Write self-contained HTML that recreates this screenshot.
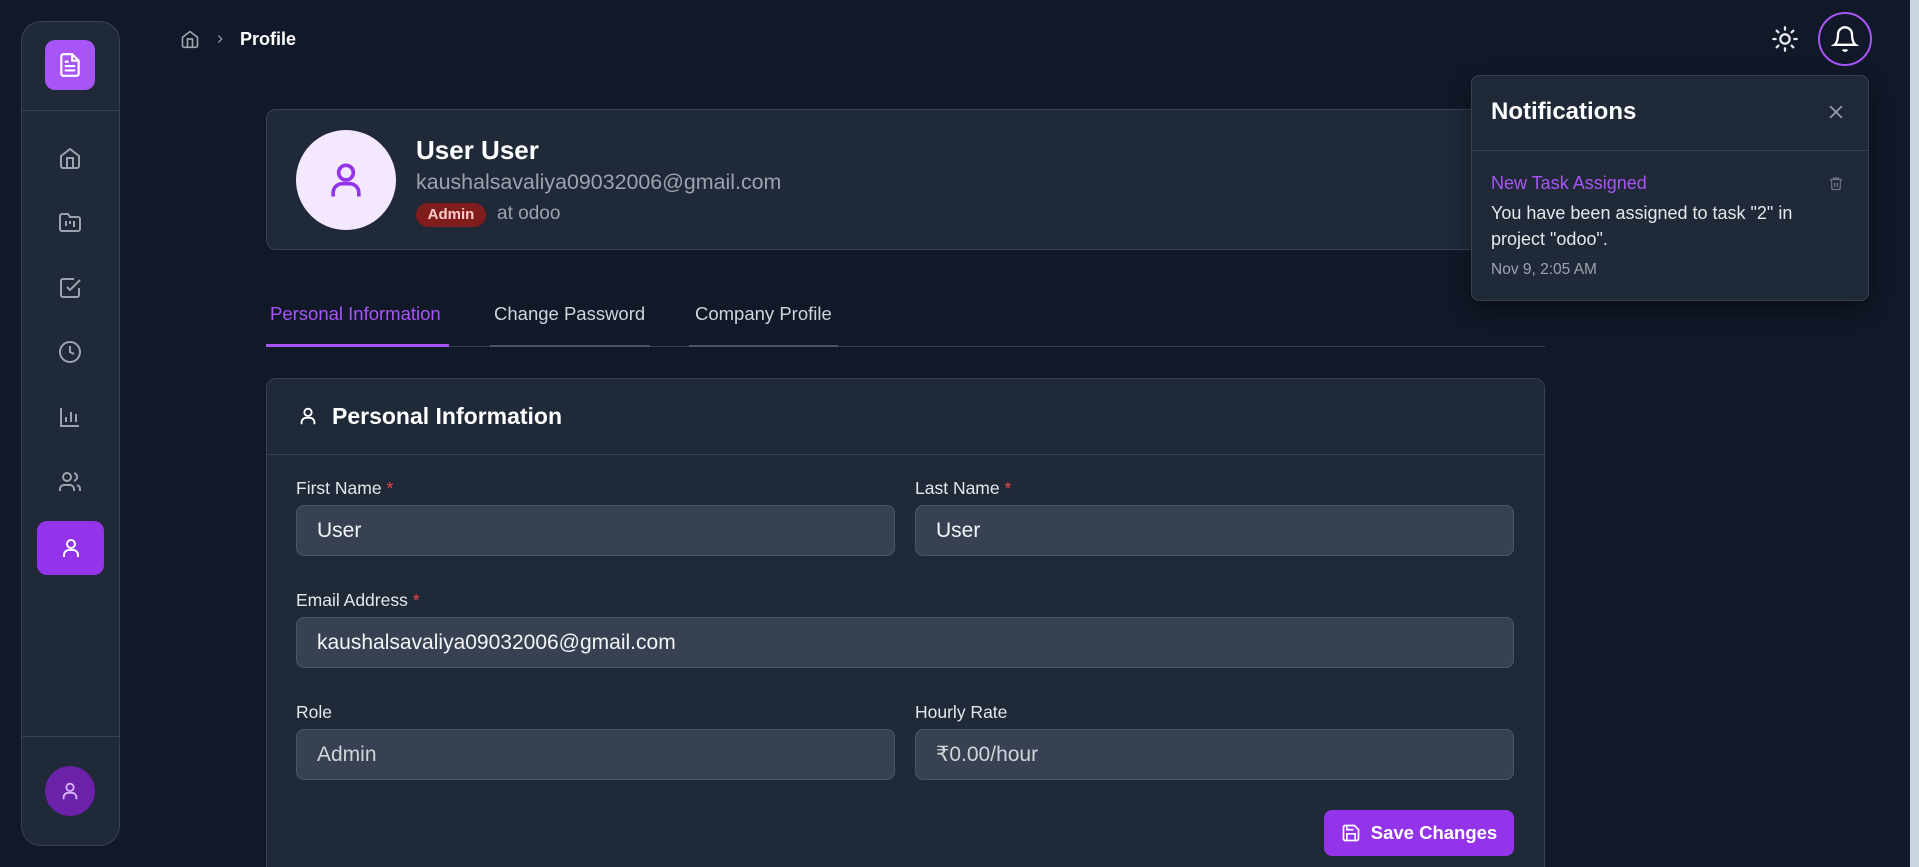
<!DOCTYPE html>
<html style="width:1919px;height:867px;overflow:hidden"><head><meta charset="utf-8"><style>
*{box-sizing:border-box;margin:0;padding:0}
body{width:1919px;height:867px;overflow:hidden;background:#111827;font-family:"Liberation Sans",sans-serif;color:#fff;position:relative}
.abs{position:absolute}
svg{display:block}
.side{left:21px;top:21px;width:99px;height:825px;background:#1f2937;border:1px solid #374151;border-radius:20px}
.nav{position:absolute;left:50px;width:40px;height:40px;display:flex;align-items:center;justify-content:center}
.card{background:#1f2937;border:1px solid #374151;border-radius:10px}
.lbl{position:absolute;font-size:17.5px;color:#e5e7eb}
.lbl b{color:#ef4444;font-weight:normal}
.inp{position:absolute;height:51px;background:#374151;border:1px solid #4b5563;border-radius:8px;font-size:21px;color:#f3f4f6;padding-left:20px;line-height:49px}
</style></head><body>
<div class="abs side"></div>
<div class="abs" style="left:45px;top:40px;width:50px;height:50px;background:#a855f7;border-radius:10px;display:flex;align-items:center;justify-content:center">
<svg width="26" height="28" viewBox="0 0 24 24" fill="none" stroke="#fff" stroke-width="2" stroke-linecap="round" stroke-linejoin="round"><path d="M14 2H6a2 2 0 0 0-2 2v16a2 2 0 0 0 2 2h12a2 2 0 0 0 2-2V8z"/><path d="M14 2v6h6"/><path d="M8 13h8M8 17h8M8 9h2"/></svg></div>
<div class="abs" style="left:22px;top:110px;width:97px;height:1px;background:#374151"></div>
<div class="abs" style="left:22px;top:736px;width:97px;height:1px;background:#374151"></div>
<div class="nav" style="top:138px"><svg width="24" height="24" viewBox="0 0 24 24" fill="none" stroke="#9ca3af" stroke-width="2"><path d="M3 10l9-7 9 7v10a2 2 0 0 1-2 2H5a2 2 0 0 1-2-2z"/><path d="M9 22V12h6v10"/></svg></div>
<div class="nav" style="top:203px"><svg width="24" height="24" viewBox="0 0 24 24" fill="none" stroke="#9ca3af" stroke-width="2"><path d="M4 20h16a2 2 0 0 0 2-2V8a2 2 0 0 0-2-2h-8l-2-3H4a2 2 0 0 0-2 2v13a2 2 0 0 0 2 2z"/><path d="M8 10v5M12 10v3M16 10v6"/></svg></div>
<div class="nav" style="top:268px"><svg width="24" height="24" viewBox="0 0 24 24" fill="none" stroke="#9ca3af" stroke-width="2"><path d="M9 11l3 3L22 4"/><path d="M21 12v7a2 2 0 0 1-2 2H5a2 2 0 0 1-2-2V5a2 2 0 0 1 2-2h11"/></svg></div>
<div class="nav" style="top:332px"><svg width="24" height="24" viewBox="0 0 24 24" fill="none" stroke="#9ca3af" stroke-width="2"><circle cx="12" cy="12" r="10"/><path d="M12 6v6l4 2"/></svg></div>
<div class="nav" style="top:397px"><svg width="24" height="24" viewBox="0 0 24 24" fill="none" stroke="#9ca3af" stroke-width="2"><path d="M3 3v18h18M8 17v-5M13 17V7M18 17v-8"/></svg></div>
<div class="nav" style="top:462px"><svg width="24" height="24" viewBox="0 0 24 24" fill="none" stroke="#9ca3af" stroke-width="2"><path d="M16 21v-2a4 4 0 0 0-4-4H6a4 4 0 0 0-4 4v2"/><circle cx="9" cy="7" r="4"/><path d="M22 21v-2a4 4 0 0 0-3-3.9M16 3.1a4 4 0 0 1 0 7.8"/></svg></div>
<div class="abs" style="left:37px;top:521px;width:67px;height:54px;background:#9333ea;border-radius:10px;display:flex;align-items:center;justify-content:center"><svg width="24" height="24" viewBox="0 0 24 24" fill="none" stroke="#fff" stroke-width="2"><circle cx="12" cy="8" r="4"/><path d="M5 21v-2a5 5 0 0 1 5-5h4a5 5 0 0 1 5 5v2"/></svg></div>
<div class="abs" style="left:45px;top:766px;width:50px;height:50px;background:#6b21a8;border-radius:50%;display:flex;align-items:center;justify-content:center"><svg width="22" height="22" viewBox="0 0 24 24" fill="none" stroke="#d8b4fe" stroke-width="2"><circle cx="12" cy="8" r="4"/><path d="M5 21v-2a5 5 0 0 1 5-5h4a5 5 0 0 1 5 5v2"/></svg></div>

<div class="abs" style="left:180px;top:29px"><svg width="20" height="20" viewBox="0 0 24 24" fill="none" stroke="#9ca3af" stroke-width="2"><path d="M3 10l9-7 9 7v10a2 2 0 0 1-2 2H5a2 2 0 0 1-2-2z"/><path d="M9 22V12h6v10"/></svg></div>
<div class="abs" style="left:213px;top:31px"><svg width="14" height="16" viewBox="0 0 24 24" fill="none" stroke="#9ca3af" stroke-width="2"><path d="M9 18l6-6-6-6"/></svg></div>
<div class="abs" style="left:240px;top:29px;font-size:18px;font-weight:bold">Profile</div>

<div class="abs" style="left:1771px;top:25px"><svg width="28" height="28" viewBox="0 0 24 24" fill="none" stroke="#e5e7eb" stroke-width="2" stroke-linecap="round"><circle cx="12" cy="12" r="4"/><path d="M12 2v2M12 20v2M4.9 4.9l1.4 1.4M17.7 17.7l1.4 1.4M2 12h2M20 12h2M4.9 19.1l1.4-1.4M17.7 6.3l1.4-1.4"/></svg></div>
<div class="abs" style="left:1818px;top:12px;width:54px;height:54px;border:2px solid #a855f7;border-radius:50%;display:flex;align-items:center;justify-content:center"><svg width="28" height="28" viewBox="0 0 24 24" fill="none" stroke="#fff" stroke-width="2"><path d="M6 8a6 6 0 0 1 12 0c0 7 3 9 3 9H3s3-2 3-9"/><path d="M10.3 21a1.9 1.9 0 0 0 3.4 0"/></svg></div>

<div class="abs card" style="left:266px;top:109px;width:1279px;height:141px"></div>
<div class="abs" style="left:296px;top:130px;width:100px;height:100px;background:#f3e8ff;border-radius:50%;display:flex;align-items:center;justify-content:center"><svg width="44" height="44" viewBox="0 0 24 24" fill="none" stroke="#9333ea" stroke-width="2"><circle cx="12" cy="8" r="4"/><path d="M5 21v-2a5 5 0 0 1 5-5h4a5 5 0 0 1 5 5v2"/></svg></div>
<div class="abs" style="left:416px;top:135px;font-size:26px;font-weight:bold">User User</div>
<div class="abs" style="left:416px;top:170px;font-size:21.4px;color:#9ca3af">kaushalsavaliya09032006@gmail.com</div>
<div class="abs" style="left:416px;top:203px;width:70px;height:24px;background:#7f1d1d;border-radius:12px;color:#fecaca;font-size:15px;font-weight:bold;text-align:center;line-height:24px">Admin</div>
<div class="abs" style="left:497px;top:203px;font-size:19px;color:#9ca3af">at odoo</div>

<div class="abs" style="left:266px;top:346px;width:1279px;height:1px;background:#374151"></div>
<div class="abs" style="left:270px;top:303px;font-size:18.5px;color:#a855f7">Personal Information</div>
<div class="abs" style="left:266px;top:344px;width:183px;height:3px;background:#a855f7"></div>
<div class="abs" style="left:494px;top:303px;font-size:18.5px;color:#d1d5db">Change Password</div>
<div class="abs" style="left:490px;top:345px;width:160px;height:2px;background:#4b5563"></div>
<div class="abs" style="left:695px;top:303px;font-size:18.5px;color:#d1d5db">Company Profile</div>
<div class="abs" style="left:689px;top:345px;width:149px;height:2px;background:#4b5563"></div>

<div class="abs card" style="left:266px;top:378px;width:1279px;height:489px;border-bottom:none;border-radius:10px 10px 0 0"></div>
<div class="abs" style="left:266px;top:454px;width:1279px;height:1px;background:#374151"></div>
<div class="abs" style="left:297px;top:404px"><svg width="22" height="24" viewBox="0 0 24 24" fill="none" stroke="#fff" stroke-width="2"><circle cx="12" cy="8" r="4"/><path d="M5 21v-2a5 5 0 0 1 5-5h4a5 5 0 0 1 5 5v2"/></svg></div>
<div class="abs" style="left:332px;top:403px;font-size:23px;font-weight:bold">Personal Information</div>

<div class="lbl" style="left:296px;top:478px">First Name <b>*</b></div>
<div class="lbl" style="left:915px;top:478px">Last Name <b>*</b></div>
<div class="inp" style="left:296px;top:505px;width:599px">User</div>
<div class="inp" style="left:915px;top:505px;width:599px">User</div>
<div class="lbl" style="left:296px;top:590px">Email Address <b>*</b></div>
<div class="inp" style="left:296px;top:617px;width:1218px">kaushalsavaliya09032006@gmail.com</div>
<div class="lbl" style="left:296px;top:702px">Role</div>
<div class="lbl" style="left:915px;top:702px">Hourly Rate</div>
<div class="inp" style="left:296px;top:729px;width:599px;color:#d1d5db">Admin</div>
<div class="inp" style="left:915px;top:729px;width:599px;color:#d1d5db">₹0.00/hour</div>
<div class="abs" style="left:1324px;top:810px;width:190px;height:46px;background:#9333ea;border-radius:8px;display:flex;align-items:center;justify-content:center;gap:10px;font-size:18.5px;font-weight:bold"><svg width="20" height="20" viewBox="0 0 24 24" fill="none" stroke="#fff" stroke-width="2"><path d="M19 21H5a2 2 0 0 1-2-2V5a2 2 0 0 1 2-2h11l5 5v11a2 2 0 0 1-2 2z"/><path d="M17 21v-8H7v8M7 3v5h8"/></svg>Save Changes</div>

<div class="abs" style="left:1471px;top:75px;width:398px;height:226px;background:#1f2937;border:1px solid #374151;border-radius:8px;box-shadow:0 8px 20px rgba(0,0,0,.4)"></div>
<div class="abs" style="left:1472px;top:150px;width:396px;height:1px;background:#374151"></div>
<div class="abs" style="left:1491px;top:98px;font-size:24px;font-weight:bold">Notifications</div>
<div class="abs" style="left:1826px;top:102px"><svg width="20" height="20" viewBox="0 0 24 24" fill="none" stroke="#9ca3af" stroke-width="2"><path d="M5 5l14 14M19 5L5 19"/></svg></div>
<div class="abs" style="left:1491px;top:173px;font-size:18px;color:#a855f7">New Task Assigned</div>
<div class="abs" style="left:1828px;top:175px"><svg width="16" height="17" viewBox="0 0 24 24" fill="none" stroke="#6b7280" stroke-width="2"><path d="M3 6h18M8 6V4h8v2M5 6l1 15h12l1-15M10 11v6M14 11v6"/></svg></div>
<div class="abs" style="left:1491px;top:200px;width:330px;font-size:18px;line-height:26px;color:#e5e7eb">You have been assigned to task "2" in project "odoo".</div>
<div class="abs" style="left:1491px;top:261px;font-size:15.5px;color:#9ca3af">Nov 9, 2:05 AM</div>

<div class="abs" style="left:1910px;top:0;width:9px;height:867px;background:#cbd5e1"></div>
</body></html>
